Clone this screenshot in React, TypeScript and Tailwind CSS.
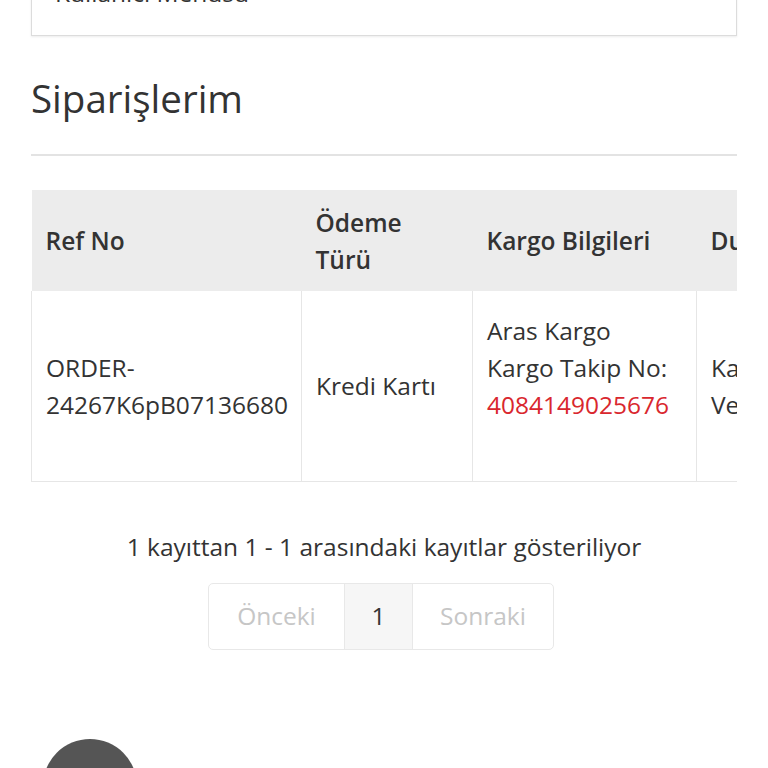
import React from 'react';

const font = { fontFamily: '"Open Sans", "Liberation Sans", sans-serif' };

export default function App() {
  return (
    <div className="min-h-[768px] bg-white overflow-hidden text-[#333]" style={font}>
      <div className="px-[31px]">
        {/* user menu card, scrolled mostly out of view */}
        <div className="-mt-[60px] h-[96px] border border-[#dcdcdc] shadow-[0_1px_2px_rgba(0,0,0,0.08)] pt-[33px] px-[23px]">
          <div className="text-[24.5px] leading-[37px]">Kullanıcı Menüsü</div>
        </div>

        <h2 className="mt-[41px] text-[38.5px] leading-[42px] font-normal text-[#333]">Siparişlerim</h2>
        <div className="mt-[35px] border-t-2 border-[#e3e3e3]" />

        <div className="mt-[34px] overflow-hidden">
          <table className="table-fixed border-collapse text-[24.5px] leading-[37px] w-[900px]">
            <colgroup>
              <col className="w-[270px]" />
              <col className="w-[171px]" />
              <col className="w-[224px]" />
              <col className="w-[235px]" />
            </colgroup>
            <thead>
              <tr className="bg-[#ececec] h-[101px]">
                <th className="px-[14px] text-left font-semibold align-middle">Ref No</th>
                <th className="px-[14px] text-left font-semibold align-middle">Ödeme Türü</th>
                <th className="px-[14px] text-left font-semibold align-middle">Kargo Bilgileri</th>
                <th className="px-[14px] text-left font-semibold align-middle">Durum</th>
              </tr>
            </thead>
            <tbody>
              <tr className="h-[190px]">
                <td className="px-[14px] align-middle border-l border-b border-[#e6e6e6]">
                  ORDER-
                  <br />
                  24267K6pB07136680
                </td>
                <td className="px-[14px] align-middle border border-t-0 border-[#e6e6e6]">Kredi Kartı</td>
                <td className="px-[14px] align-middle border border-t-0 border-[#e6e6e6]">
                  <div className="pb-[37px]">
                    Aras Kargo
                    <br />
                    Kargo Takip No:
                    <br />
                    <span className="text-[#d9272e]">4084149025676</span>
                  </div>
                </td>
                <td className="px-[14px] align-middle border border-t-0 border-[#e6e6e6]">
                  Kargoya
                  <br />
                  Verildi
                </td>
              </tr>
            </tbody>
          </table>
        </div>

        <p className="mt-[46px] text-center text-[24.5px] leading-[37px] text-[#333]">
          1 kayıttan 1 - 1 arasındaki kayıtlar gösteriliyor
        </p>

        <div className="mt-[18px] flex justify-center pr-[6px]">
          <div className="flex h-[67px] border border-[#e8e8e8] rounded-[5px] overflow-hidden text-[24.5px]">
            <span className="w-[135px] flex items-center justify-center text-[#c6c6c6]">Önceki</span>
            <span className="w-[69px] flex items-center justify-center bg-[#f6f6f6] border-x border-[#e8e8e8] text-[#333]">1</span>
            <span className="w-[140px] flex items-center justify-center text-[#c6c6c6]">Sonraki</span>
          </div>
        </div>

        <div className="mt-[89px] ml-[12px] w-[94px] h-[94px] rounded-full bg-[#555]" />
      </div>
    </div>
  );
}
